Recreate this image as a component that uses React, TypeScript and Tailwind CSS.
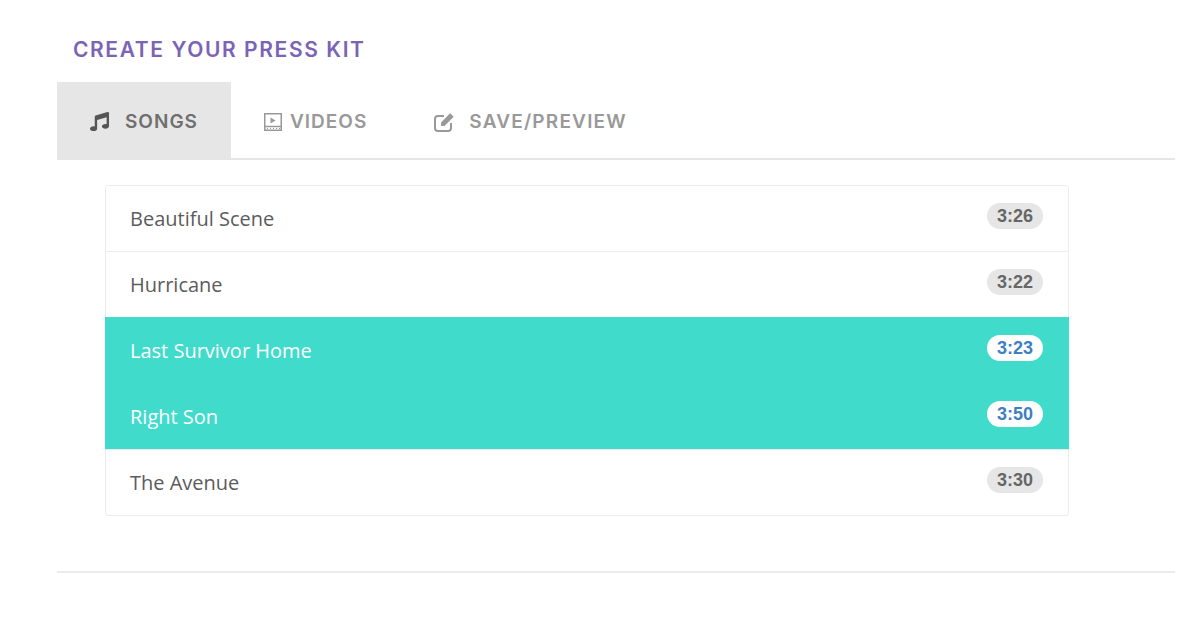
import { FaMusic } from "react-icons/fa";

const songs = [
  { title: "Beautiful Scene", time: "3:26", active: false },
  { title: "Hurricane", time: "3:22", active: false },
  { title: "Last Survivor Home", time: "3:23", active: true },
  { title: "Right Son", time: "3:50", active: true },
  { title: "The Avenue", time: "3:30", active: false },
];

function FilmIcon() {
  return (
    <svg width="20" height="20" viewBox="0 0 20 20" fill="none" stroke="currentColor" strokeWidth="1.5">
      <rect x="1.75" y="1.75" width="16.5" height="16.5" />
      <path d="M2 14.5h16" />
      <path d="M4 16.5h1M7 16.5h1M10 16.5h1M13 16.5h1M16 16.5h1" strokeWidth="1.2" />
      <path d="M7.5 5.5v6l5-3z" fill="currentColor" stroke="none" />
    </svg>
  );
}

// pencil-square: open rounded box with a solid pencil over the corner
function EditIcon() {
  return (
    <svg width="21" height="20" viewBox="0 0 21 20" fill="none" stroke="currentColor" strokeWidth="2">
      <path d="M10 4H4a3 3 0 0 0-3 3v9a3 3 0 0 0 3 3h10a3 3 0 0 0 3-3v-5" />
      <path d="M7 10.5 16.2 1.3l3.5 3.5-9.2 9.2H7z" fill="currentColor" stroke="none" />
    </svg>
  );
}

export default function App() {
  return (
    <div className="w-[1200px] h-[628px] bg-white pl-[57px] pr-[25px] overflow-hidden font-['Inter',sans-serif]">
      <h1 className="h-[82px] pl-4 pt-[37px] text-[21px] leading-[26px] font-semibold text-[#7b63b5] tracking-[1.6px]">
        CREATE YOUR PRESS KIT
      </h1>

      <div className="flex h-[78px] border-b-2 border-[#e6e6e6] pt-[3px] text-[19px] font-semibold tracking-[1px]">
        <div className="-mt-[3px] flex w-[174px] items-center bg-[#e6e6e6] pl-[33px] pt-[3px] text-[#6f6f6f]">
          <FaMusic className="h-[19px] w-[19px] text-[#555555]" />
          <span className="ml-4 mt-[2px]">SONGS</span>
        </div>
        <div className="flex items-center pl-[32px] text-[#999999]">
          <FilmIcon />
          <span className="ml-[7px] mt-[2px]">VIDEOS</span>
        </div>
        <div className="flex items-center pl-[67px] text-[#999999]">
          <EditIcon />
          <span className="ml-[14px] mt-[2px] tracking-[1.2px]">SAVE/PREVIEW</span>
        </div>
      </div>

      <div className="ml-12 mt-[25px] w-[964px] font-['Open_Sans',sans-serif]">
        {songs.map((song) => (
          <div
            key={song.title}
            className={
              song.active
                ? "-mb-px flex h-[67px] items-start justify-between border border-[#41dbcb] bg-[#41dbcb] pl-6 pr-[24px] pt-[17px] text-white"
                : "-mb-px flex h-[67px] items-start justify-between border border-[#ececec] pl-6 pr-[24px] pt-[17px] text-[#5c5c5c] first:rounded-t-[3px] last:rounded-b-[3px]"
            }
          >
            <span className="mt-px text-[20px] leading-[30px]">{song.title}</span>
            <span
              className={
                song.active
                  ? "mr-px rounded-full bg-white px-[10px] text-[18px] leading-[26px] font-bold text-[#3f7fc4] font-['Liberation_Sans',sans-serif]"
                  : "mr-px rounded-full bg-[#e6e6e6] px-[10px] text-[18px] leading-[26px] font-bold text-[#666666] font-['Liberation_Sans',sans-serif]"
              }
            >
              {song.time}
            </span>
          </div>
        ))}
      </div>

      <hr className="mt-[56px] border-t-2 border-[#ececec]" />
    </div>
  );
}
